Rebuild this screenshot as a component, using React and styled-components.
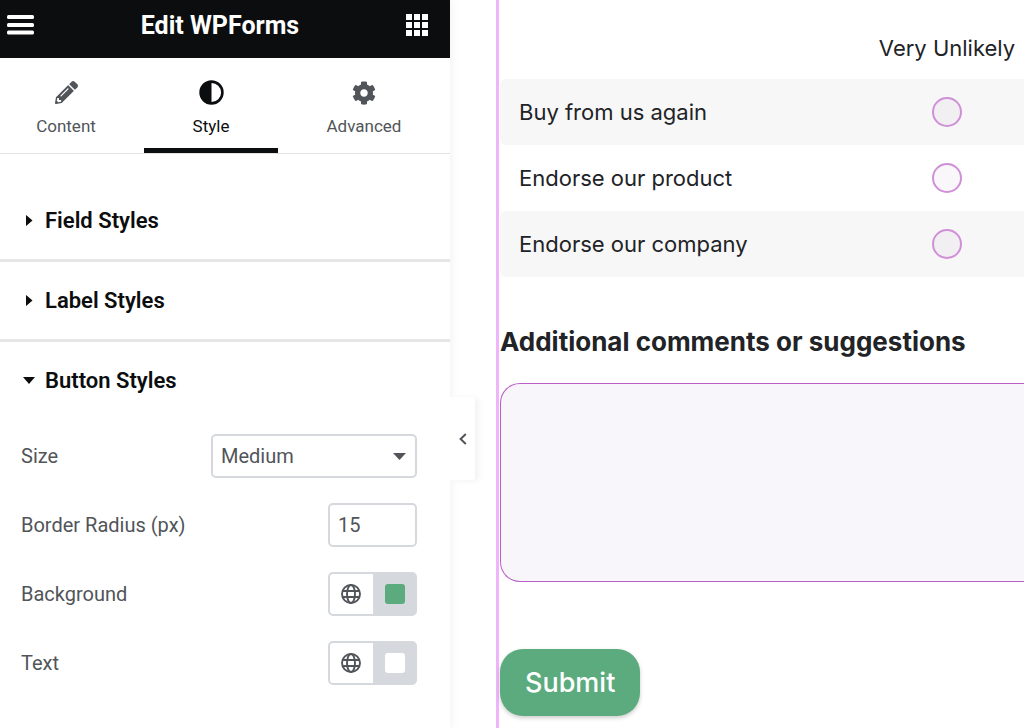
import { useState } from 'react';
import styled, { createGlobalStyle } from 'styled-components';
import { FaPencilAlt, FaCog } from 'react-icons/fa';

const App = () => {
  return (
    <Editor>
      <GlobalStyle />
      <Panel />
      <Preview />
    </Editor>
  );
};

const tabs = [
  { id: 'content', label: 'Content', icon: <FaPencilAlt size={23} /> },
  { id: 'style', label: 'Style', icon: <ContrastIcon /> },
  { id: 'advanced', label: 'Advanced', icon: <FaCog size={24} /> },
];

const questions = [
  { id: 'buy', label: 'Buy from us again' },
  { id: 'product', label: 'Endorse our product' },
  { id: 'company', label: 'Endorse our company' },
];

const Panel = () => {
  const [activeTab, setActiveTab] = useState('style');

  return (
    <Sidebar>
      <PanelHeader>
        <HeaderButton aria-label="Menu">
          <MenuIcon />
        </HeaderButton>
        <PanelTitle>Edit WPForms</PanelTitle>
        <HeaderButton aria-label="Widgets">
          <GridIcon />
        </HeaderButton>
      </PanelHeader>
      <Tabs>
        {tabs.map((tab) => (
          <Tab
            key={tab.id}
            $active={tab.id === activeTab}
            onClick={() => setActiveTab(tab.id)}
          >
            <TabIcon>{tab.icon}</TabIcon>
            {tab.label}
          </Tab>
        ))}
      </Tabs>
      <Sections>
        <Section>
          <SectionToggle aria-expanded="false">
            <Caret />
            Field Styles
          </SectionToggle>
        </Section>
        <Section>
          <SectionToggle aria-expanded="false">
            <Caret />
            Label Styles
          </SectionToggle>
        </Section>
        <Section>
          <SectionToggle aria-expanded="true">
            <Caret $open />
            Button Styles
          </SectionToggle>
          <Controls>
            <Control>
              <Label htmlFor="size">Size</Label>
              <SelectWrap>
                <Select id="size" defaultValue="medium">
                  <option value="small">Small</option>
                  <option value="medium">Medium</option>
                  <option value="large">Large</option>
                </Select>
                <SelectArrow />
              </SelectWrap>
            </Control>
            <Control>
              <Label htmlFor="radius">Border Radius (px)</Label>
              <NumberInput id="radius" type="text" defaultValue="15" />
            </Control>
            <ColorControl label="Background" color="#5bab7e" />
            <ColorControl label="Text" color="#ffffff" />
          </Controls>
        </Section>
      </Sections>
      <CollapseButton aria-label="Hide panel">
        <ChevronIcon />
      </CollapseButton>
    </Sidebar>
  );
};

const ColorControl = ({ label, color }) => {
  return (
    <Control>
      <Label as="span">{label}</Label>
      <ColorGroup>
        <GlobeButton aria-label={`${label} global color`}>
          <GlobeIcon />
        </GlobeButton>
        <SwatchButton aria-label={`${label} color`}>
          <Swatch $color={color} />
        </SwatchButton>
      </ColorGroup>
    </Control>
  );
};

const Preview = () => {
  return (
    <PreviewPane>
      <Form onSubmit={(e) => e.preventDefault()}>
        <Likert>
          <thead>
            <tr>
              <LikertHead aria-label="Question" />
              <LikertHead $answer>Very Unlikely</LikertHead>
            </tr>
          </thead>
          <tbody>
            {questions.map((question) => (
              <LikertRow key={question.id}>
                <LikertQuestion id={question.id}>{question.label}</LikertQuestion>
                <LikertAnswer>
                  <Radio type="radio" name={question.id} aria-labelledby={question.id} />
                </LikertAnswer>
              </LikertRow>
            ))}
          </tbody>
        </Likert>
        <FieldLabel htmlFor="comments">Additional comments or suggestions</FieldLabel>
        <Comments id="comments" />
        <Submit type="submit">Submit</Submit>
      </Form>
    </PreviewPane>
  );
};

function MenuIcon() {
  return (
    <svg width="27" height="20" viewBox="0 0 27 20" fill="currentColor">
      <rect width="27" height="4" rx="1.5" />
      <rect y="8" width="27" height="4" rx="1.5" />
      <rect y="15.5" width="27" height="4" rx="1.5" />
    </svg>
  );
}

function GridIcon() {
  return (
    <svg width="22" height="22" viewBox="0 0 22 22" fill="currentColor">
      {[0, 8, 16].map((y) =>
        [0, 8, 16].map((x) => <rect key={`${x}-${y}`} x={x} y={y} width="6" height="6" />)
      )}
    </svg>
  );
}

function ContrastIcon() {
  return (
    <svg width="25" height="25" viewBox="0 0 25 25">
      <circle cx="12.5" cy="12.5" r="10.9" fill="none" stroke="currentColor" strokeWidth="2.6" />
      <path d="M12.5 2a10.5 10.5 0 0 0 0 21z" fill="currentColor" />
    </svg>
  );
}

function GlobeIcon() {
  return (
    <svg width="20" height="20" viewBox="0 0 20 20" fill="none" stroke="currentColor" strokeWidth="1.9">
      <circle cx="10" cy="10" r="9" />
      <ellipse cx="10" cy="10" rx="4" ry="9" />
      <path d="M1.6 7h16.8M1.6 13h16.8" />
    </svg>
  );
}

function ChevronIcon() {
  return (
    <svg width="8" height="12" viewBox="0 0 8 12" fill="none" stroke="currentColor" strokeWidth="2">
      <path d="M6.8 1 1.6 6l5.2 5" />
    </svg>
  );
}

const GlobalStyle = createGlobalStyle`
  *, *::before, *::after {
    box-sizing: border-box;
  }

  body {
    margin: 0;
    background-color: #fff;
  }

  button, input, select, textarea {
    font: inherit;
    color: inherit;
  }

  button {
    padding: 0;
    border: none;
    background: none;
    cursor: pointer;
  }

  svg {
    display: block;
  }
`;

const Editor = styled.div`
  display: grid;
  grid-template-columns: 450px 1fr;
  min-height: 100vh;
  overflow: hidden;
`;

const Sidebar = styled.aside`
  position: relative;
  background-color: #fff;
  box-shadow: 2px 0 8px rgba(0, 0, 0, 0.05);
  color: #515559;
  font-family: Roboto, sans-serif;
  font-size: 20px;
`;

const PanelHeader = styled.header`
  display: flex;
  align-items: center;
  justify-content: space-between;
  height: 58px;
  padding: 0 22px 8px 7px;
  background-color: #0c0d0e;
  color: #fff;
`;

const HeaderButton = styled.button`
  color: #fff;
`;

const PanelTitle = styled.h1`
  margin: 0;
  font-size: 25px;
  font-weight: 700;
`;

const Tabs = styled.nav`
  display: grid;
  grid-template-columns: 132px 134px 1fr;
  gap: 12px;
  height: 96px;
  padding-right: 12px;
  border-bottom: 1px solid #e0e2e4;
`;

const Tab = styled.button`
  display: flex;
  flex-direction: column;
  align-items: center;
  gap: 9px;
  padding-top: 22px;
  border-bottom: 5px solid ${({ $active }) => ($active ? '#0c0d0e' : 'transparent')};
  color: ${({ $active }) => ($active ? '#0c0d0e' : '#515559')};
  font-size: 17px;
  line-height: 24px;
`;

const TabIcon = styled.span`
  display: flex;
  align-items: center;
  height: 25px;
`;

const Sections = styled.div`
  padding-top: 28px;
`;

const Section = styled.section`
  & + & {
    border-top: 3px solid #e6e6e6;
  }
`;

const SectionToggle = styled.button`
  display: flex;
  align-items: center;
  width: 100%;
  height: 77px;
  padding-left: 21px;
  color: #0c0d0e;
  font-size: 22px;
  font-weight: 600;
`;

const Caret = styled.span`
  display: flex;
  justify-content: center;
  width: 16px;
  margin-right: 8px;

  &::before {
    content: '';
    width: ${({ $open }) => ($open ? '12px' : '7px')};
    height: ${({ $open }) => ($open ? '7px' : '12px')};
    background-color: currentColor;
    clip-path: ${({ $open }) =>
      $open ? 'polygon(0 0, 100% 0, 50% 100%)' : 'polygon(0 0, 100% 50%, 0 100%)'};
  }
`;

const Controls = styled.div`
  display: flex;
  flex-direction: column;
  gap: 25px;
  padding: 15px 33px 43px 21px;
`;

const Control = styled.div`
  display: flex;
  align-items: center;
  justify-content: space-between;
  height: 44px;
`;

const Label = styled.label`
  font-size: 20px;
`;

const SelectWrap = styled.div`
  position: relative;
  width: 206px;
  height: 44px;
`;

const Select = styled.select`
  appearance: none;
  width: 100%;
  height: 100%;
  padding: 0 8px;
  border: 2px solid #d5d8dc;
  border-radius: 5px;
  background-color: #fff;
`;

const SelectArrow = styled.span`
  position: absolute;
  top: 19px;
  right: 11px;
  width: 13px;
  height: 7px;
  background-color: currentColor;
  clip-path: polygon(0 0, 100% 0, 50% 100%);
  pointer-events: none;
`;

const NumberInput = styled.input`
  width: 89px;
  height: 44px;
  padding: 0 8px;
  border: 2px solid #d5d8dc;
  border-radius: 5px;
`;

const ColorGroup = styled.div`
  display: grid;
  grid-template-columns: 1fr 1fr;
  width: 89px;
  height: 44px;
  border: 2px solid #d5d8dc;
  border-radius: 5px;
`;

const GlobeButton = styled.button`
  display: grid;
  place-items: center;
`;

const SwatchButton = styled.button`
  display: grid;
  place-items: center;
  padding-left: 2px;
  background-color: #d5d8dc;
`;

const Swatch = styled.span`
  width: 20px;
  height: 20px;
  border-radius: 3px;
  background-color: ${({ $color }) => $color};
`;

const CollapseButton = styled.button`
  position: absolute;
  top: 397px;
  left: 100%;
  display: grid;
  place-items: center;
  width: 25px;
  height: 83px;
  border-radius: 0 3px 3px 0;
  background-color: #fff;
  box-shadow: 4px 1px 6px rgba(0, 0, 0, 0.05);
`;

const PreviewPane = styled.main`
  margin-left: 46px;
  border-left: 3px solid #f0b4fb;
  color: #212326;
  font-family: Inter, sans-serif;
  font-size: 22px;
`;

const Form = styled.form`
  display: flex;
  flex-direction: column;
  align-items: flex-start;
  padding: 16px 0 12px 1px;
`;

const Likert = styled.table`
  width: 100%;
  border-collapse: collapse;
`;

const LikertHead = styled.th`
  width: ${({ $answer }) => ($answer ? '154px' : 'auto')};
  height: 63px;
  padding: 0;
  font-weight: 400;
  white-space: nowrap;
`;

const LikertRow = styled.tr`
  &:nth-child(odd) > * {
    background-color: #f7f7f7;
  }
`;

const LikertQuestion = styled.td`
  height: 66px;
  padding: 0 0 0 19px;
  border-radius: 6px 0 0 6px;
`;

const LikertAnswer = styled.td`
  padding: 0;
  text-align: center;
`;

const Radio = styled.input`
  appearance: none;
  width: 30px;
  height: 30px;
  margin: 0;
  border: 2px solid #d090d8;
  border-radius: 50%;
  background-color: rgba(90, 40, 130, 0.04);
  vertical-align: middle;
`;

const FieldLabel = styled.label`
  margin: 49px 0 25px;
  font-size: 26px;
  font-weight: 700;
  line-height: 32px;
`;

const Comments = styled.textarea`
  width: 100%;
  height: 199px;
  padding: 16px;
  border: 1px solid #b95fc6;
  border-right: none;
  border-radius: 20px 0 0 20px;
  background-color: #f8f6fb;
  resize: none;
`;

const Submit = styled.button`
  margin-top: 67px;
  padding: 0 25px;
  border-radius: 23px;
  background-color: #5bab7e;
  box-shadow: 0 2px 4px rgba(0, 0, 0, 0.2);
  color: #fff;
  font-size: 27px;
  font-weight: 500;
  line-height: 67px;
`;

export default App;
